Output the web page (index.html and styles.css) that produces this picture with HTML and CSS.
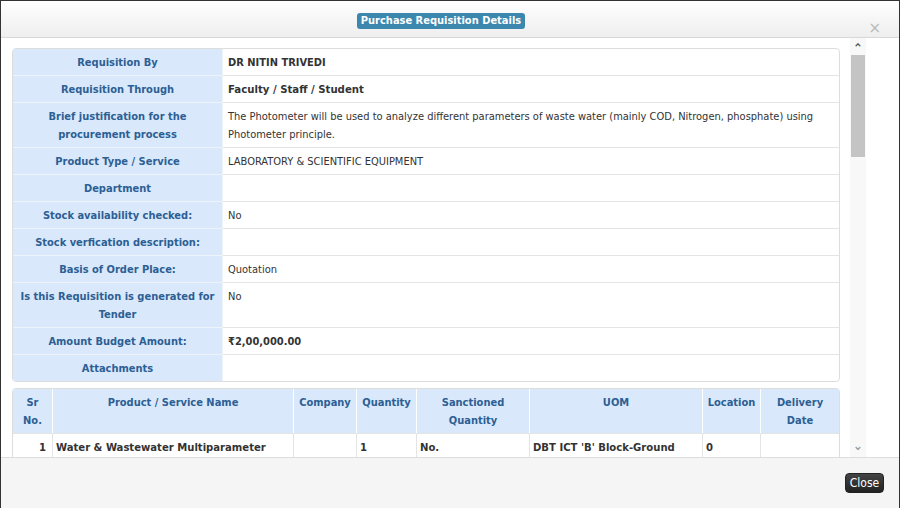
FILE: index.html
```html
<!DOCTYPE html>
<html lang="en">
<head>
	<meta charset="UTF-8">
	<link rel="stylesheet" href="styles.css">
	<title>Purchase Requisition Details</title>
</head>
<body>
<div class="modal">
	<div class="modal-header">
		<span></span>
		<span class="title">Purchase Requisition Details</span>
		<span class="close-x">&times;</span>
	</div>
	<div class="modal-body">
		<div class="content">
			<table class="details" cellspacing="0">
				<tr><th>Requisition By</th><td class="strong">DR NITIN TRIVEDI</td></tr>
				<tr><th>Requisition Through</th><td class="strong big">Faculty / Staff / Student</td></tr>
				<tr><th>Brief justification for the procurement process</th><td>The Photometer will be used to analyze different parameters of waste water (mainly COD, Nitrogen, phosphate) using Photometer principle.</td></tr>
				<tr><th>Product Type / Service</th><td>LABORATORY &amp; SCIENTIFIC EQUIPMENT</td></tr>
				<tr><th>Department</th><td></td></tr>
				<tr><th>Stock availability checked:</th><td>No</td></tr>
				<tr><th>Stock verfication description:</th><td></td></tr>
				<tr><th>Basis of Order Place:</th><td>Quotation</td></tr>
				<tr><th>Is this Requisition is generated for Tender</th><td>No</td></tr>
				<tr><th>Amount Budget Amount:</th><td class="strong">&#8377;2,00,000.00</td></tr>
				<tr><th>Attachments</th><td></td></tr>
			</table>
			<table class="items" cellspacing="0">
				<colgroup>
					<col style="width:39px"><col style="width:241px"><col style="width:63px"><col style="width:60px">
					<col style="width:113px"><col style="width:173px"><col style="width:58px"><col>
				</colgroup>
				<tr>
					<th>Sr<br>No.</th>
					<th>Product / Service Name</th>
					<th>Company</th>
					<th>Quantity</th>
					<th>Sanctioned Quantity</th>
					<th>UOM</th>
					<th>Location</th>
					<th>Delivery Date</th>
				</tr>
				<tr>
					<td class="num">1</td>
					<td>Water &amp; Wastewater Multiparameter</td>
					<td></td>
					<td>1</td>
					<td>No.</td>
					<td>DBT ICT 'B' Block-Ground</td>
					<td>0</td>
					<td></td>
				</tr>
			</table>
		</div>
		<div class="scrollbar">
			<span class="arrow">&#8963;</span>
			<div class="track"><div class="thumb"></div></div>
			<span class="arrow down">&#8964;</span>
		</div>
	</div>
	<div class="modal-footer">
		<button class="btn-close">Close</button>
	</div>
</div>
</body>
</html>
```

FILE: styles.css
```css
html,body{
	margin: 0;
	padding: 0;
}
body{
	background: #222;
	font-family: "DejaVu Sans Condensed", "DejaVu Sans", sans-serif;
	font-size: 11px;
	color: #333;
}
.modal{
	box-sizing: border-box;
	width: 900px;
	height: 508px;
	border: 1px solid #333;
	border-bottom: 0;
	background: #fff;
	display: flex;
	flex-direction: column;
}
.modal-header{
	height: 36px;
	border-bottom: 1px solid #d8d8d8;
	background: linear-gradient(#fff, #eee);
	display: grid;
	grid-template-columns: 1fr auto 1fr;
	align-items: start;
}
.title{
	margin: 12px 18px 0 0;
	padding: 0 4px;
	height: 16px;
	line-height: 16px;
	border-radius: 3px;
	background: #3c87ae;
	color: #fff;
	font-weight: bold;
	font-size: 11px;
}
.close-x{
	justify-self: end;
	margin: 19px 18px 0 0;
	color: #bbb;
	font-size: 15px;
	line-height: 16px;
	font-family: "DejaVu Sans", sans-serif;
}
.modal-body{
	height: 419px;
	overflow: hidden;
	display: flex;
}
.content{
	width: 828px;
	padding: 10px 10px 0 11px;
}
.details,.items{
	width: 828px;
	border: 1px solid #ddd;
	border-radius: 4px;
	border-collapse: separate;
}
.details th,.details td,.items th,.items td{
	padding: 5px 5px 3px;
	line-height: 18px;
	border-top: 1px solid #e4e4e4;
	vertical-align: top;
}
.details tr:first-child th,.details tr:first-child td,
.items tr:first-child th{
	border-top: 0;
}
.details th{
	width: 199px;
	background: #dae8fb;
	color: #2c5f94;
	text-align: center;
	border-top-color: #eef3fa;
	border-right: 1px solid #eef3fa;
}
.details td{
	text-align: left;
	padding-left: 5px;
}
.strong{
	font-weight: bold;
}
.big{
	font-size: 11.3px;
}
.items{
	margin-top: 6px;
	table-layout: fixed;
}
.items th{
	background: #dae8fb;
	color: #2c5f94;
	text-align: center;
	border-left: 1px solid #fff;
	padding: 5px 2px 3px;
}
.items td{
	font-weight: bold;
	font-size: 11.2px;
	border-left: 1px solid #e4e4e4;
	padding: 5px 3px 3px;
}
.items th:first-child,.items td:first-child{
	border-left: 0;
}
.items td.num{
	text-align: right;
	padding-right: 6px;
}
.scrollbar{
	width: 16px;
	display: flex;
	flex-direction: column;
	align-items: center;
	background: #f8f8f8;
}
.arrow{
	height: 17px;
	line-height: 22px;
	font-size: 13px;
	color: #555;
	font-weight: bold;
}
.arrow.down{
	line-height: 12px;
	color: #999;
}
.track{
	flex: 1;
	width: 14px;
}
.thumb{
	height: 102px;
	background: #c4c4c4;
}
.modal-footer{
	height: 50px;
	border-top: 1px solid #ddd;
	background: #f5f5f5;
	display: flex;
	justify-content: flex-end;
	align-items: flex-start;
}
.btn-close{
	margin: 15px 15px 0 0;
	width: 39px;
	height: 20px;
	padding: 0;
	border: 1px solid #222;
	border-radius: 4px;
	background: linear-gradient(#444, #222);
	color: #fff;
	font-family: "DejaVu Sans Condensed", sans-serif;
	font-size: 12px;
}
```
